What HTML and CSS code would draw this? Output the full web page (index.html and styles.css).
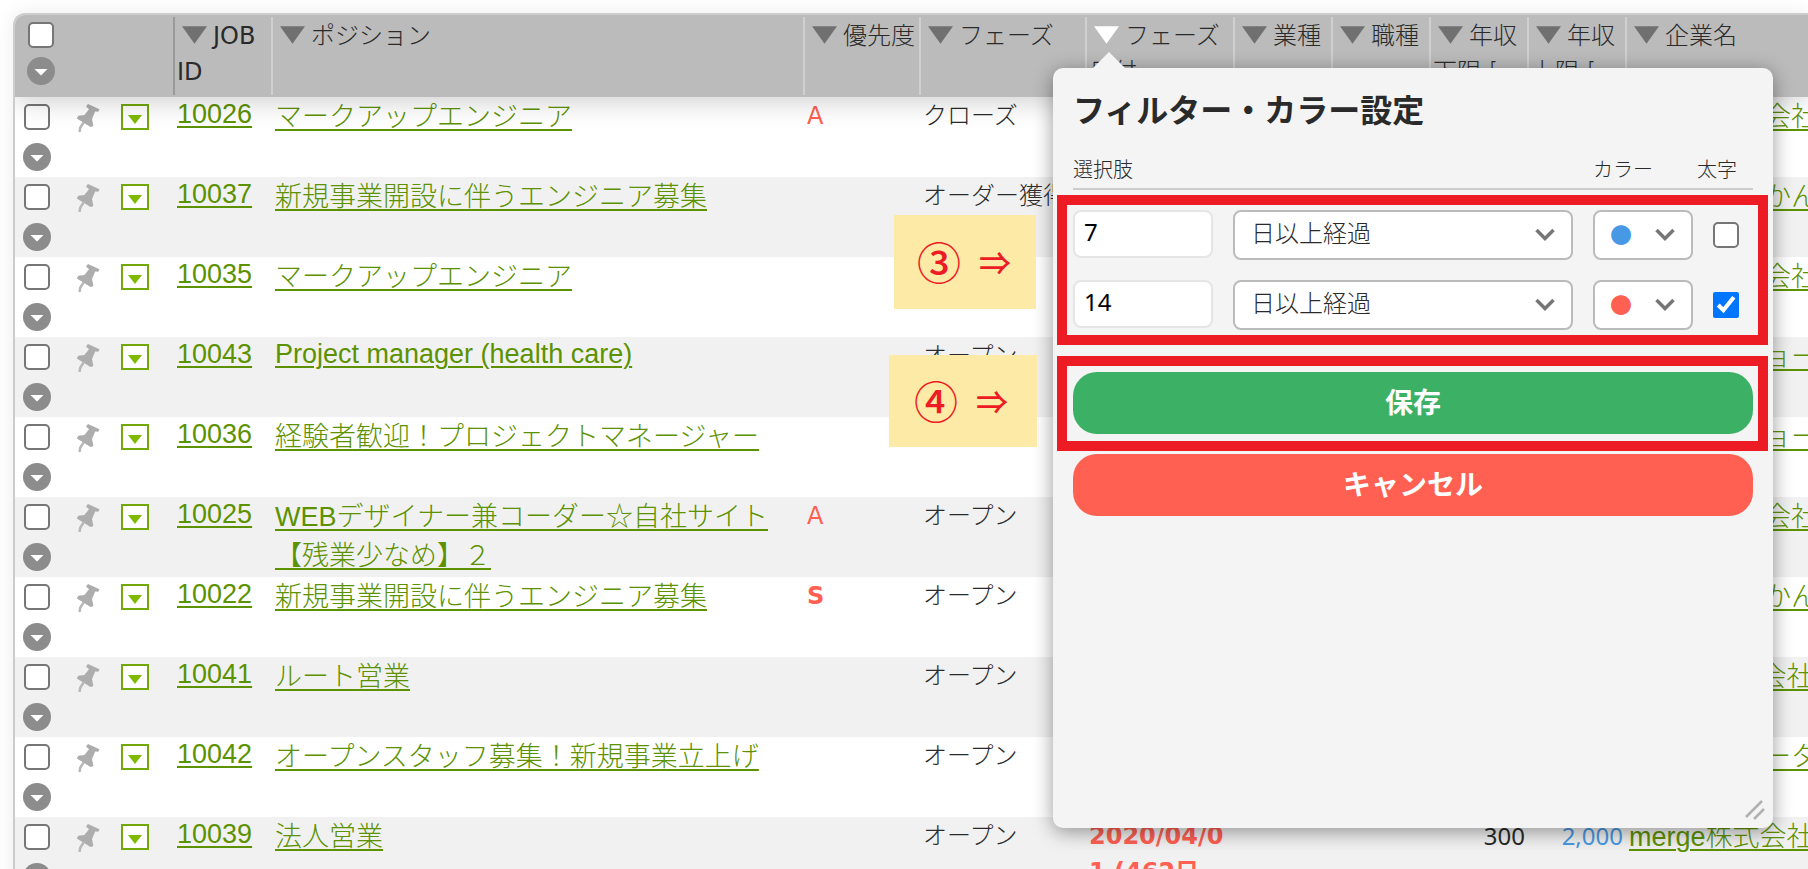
FILE: index.html
```html
<!DOCTYPE html>
<html lang="ja">
<head>
<meta charset="utf-8">
<title>JOB一覧</title>
<link rel="stylesheet" href="styles.css">
</head>
<body>
<svg class="symbols" aria-hidden="true">
  <symbol id="tri" viewBox="0 0 26 18"><path d="M0 0H26L13 18Z" fill="currentColor"/></symbol>
  <symbol id="circle" viewBox="0 0 28 28"><circle cx="14" cy="14" r="14" fill="#8c8c8c"/><path d="M7.500 12H20.500L14 18.500Z" fill="#fff"/></symbol>
  <symbol id="pin" viewBox="0 0 24 28"><path d="M12 0L23.500 5.200L22.300 7.800L19.200 7.600L16 15L17.400 22L14.600 23L.8 14.500L2.200 11.700L8.400 11L13 5.200L10 2.600Z" fill="#adadad"/><path d="M8 18L4.300 23.500L3.500 28" fill="none" stroke="#b8b8b8" stroke-width="2.500"/></symbol>
  <symbol id="drop" viewBox="0 0 14 9"><path d="M0 0H14L7 9Z" fill="#7fba00"/></symbol>
  <symbol id="chevron" viewBox="0 0 20 14"><path d="M1.500 2L10 10.500L18.500 2" fill="none" stroke="#767676" stroke-width="3.500"/></symbol>
</svg>
<main class="page">
  <div class="list">
    <table class="jobs">
      <colgroup>
        <col class="c-tools"><col class="c-narrow"><col class="c-title"><col class="c-priority"><col class="c-phase"><col class="c-date"><col class="c-narrow"><col class="c-narrow"><col class="c-narrow"><col class="c-narrow"><col>
      </colgroup>
      <thead>
        <tr>
          <th><div class="tools"><div class="pick"><input type="checkbox" aria-label="すべて選択"><button type="button" class="more" aria-label="一括操作"><svg><use href="#circle"/></svg></button></div></div></th>
          <th class="first"><div class="head"><button type="button" class="sort" aria-label="絞り込み"><svg><use href="#tri"/></svg></button>JOB ID</div></th>
          <th><div class="head"><button type="button" class="sort" aria-label="絞り込み"><svg><use href="#tri"/></svg></button>ポジション</div></th>
          <th><div class="head"><button type="button" class="sort" aria-label="絞り込み"><svg><use href="#tri"/></svg></button>優先度</div></th>
          <th><div class="head"><button type="button" class="sort" aria-label="絞り込み"><svg><use href="#tri"/></svg></button>フェーズ</div></th>
          <th><div class="head"><button type="button" class="sort active" aria-label="絞り込み"><svg><use href="#tri"/></svg></button>フェーズ日付</div></th>
          <th><div class="head"><button type="button" class="sort" aria-label="絞り込み"><svg><use href="#tri"/></svg></button>業種</div></th>
          <th><div class="head"><button type="button" class="sort" aria-label="絞り込み"><svg><use href="#tri"/></svg></button>職種</div></th>
          <th><div class="head"><button type="button" class="sort" aria-label="絞り込み"><svg><use href="#tri"/></svg></button>年収下限 [</div></th>
          <th><div class="head"><button type="button" class="sort" aria-label="絞り込み"><svg><use href="#tri"/></svg></button>年収上限 [</div></th>
          <th><div class="head"><button type="button" class="sort" aria-label="絞り込み"><svg><use href="#tri"/></svg></button>企業名</div></th>
        </tr>
      </thead>
      <tbody>
        <tr>
          <td><div class="tools"><div class="pick"><input type="checkbox" aria-label="10026を選択"><button type="button" class="more" aria-label="操作"><svg><use href="#circle"/></svg></button></div><button type="button" class="pin" aria-label="ピン留め"><svg><use href="#pin"/></svg></button><button type="button" class="drop" aria-label="メニュー"><svg><use href="#drop"/></svg></button></div></td>
          <td class="id"><a href="#10026">10026</a></td><td class="name"><a href="#10026">マークアップエンジニア</a></td><td class="red">A</td><td>クローズ</td><td></td><td></td><td></td><td></td><td></td><td class="name company"><a href="#c1">りんご株式会社</a></td>
        </tr>
        <tr>
          <td><div class="tools"><div class="pick"><input type="checkbox" aria-label="10037を選択"><button type="button" class="more" aria-label="操作"><svg><use href="#circle"/></svg></button></div><button type="button" class="pin" aria-label="ピン留め"><svg><use href="#pin"/></svg></button><button type="button" class="drop" aria-label="メニュー"><svg><use href="#drop"/></svg></button></div></td>
          <td class="id"><a href="#10037">10037</a></td><td class="name"><a href="#10037">新規事業開設に伴うエンジニア募集</a></td><td></td><td>オーダー獲得</td><td></td><td></td><td></td><td></td><td></td><td class="name company"><a href="#c2">株式会社みかん</a></td>
        </tr>
        <tr>
          <td><div class="tools"><div class="pick"><input type="checkbox" aria-label="10035を選択"><button type="button" class="more" aria-label="操作"><svg><use href="#circle"/></svg></button></div><button type="button" class="pin" aria-label="ピン留め"><svg><use href="#pin"/></svg></button><button type="button" class="drop" aria-label="メニュー"><svg><use href="#drop"/></svg></button></div></td>
          <td class="id"><a href="#10035">10035</a></td><td class="name"><a href="#10035">マークアップエンジニア</a></td><td></td><td></td><td></td><td></td><td></td><td></td><td></td><td class="name company"><a href="#c1">りんご株式会社</a></td>
        </tr>
        <tr>
          <td><div class="tools"><div class="pick"><input type="checkbox" aria-label="10043を選択"><button type="button" class="more" aria-label="操作"><svg><use href="#circle"/></svg></button></div><button type="button" class="pin" aria-label="ピン留め"><svg><use href="#pin"/></svg></button><button type="button" class="drop" aria-label="メニュー"><svg><use href="#drop"/></svg></button></div></td>
          <td class="id"><a href="#10043">10043</a></td><td class="name latin"><a href="#10043">Project manager (health care)</a></td><td></td><td>オープン</td><td></td><td></td><td></td><td></td><td></td><td class="name company"><a href="#c3">株式会社ショー</a></td>
        </tr>
        <tr>
          <td><div class="tools"><div class="pick"><input type="checkbox" aria-label="10036を選択"><button type="button" class="more" aria-label="操作"><svg><use href="#circle"/></svg></button></div><button type="button" class="pin" aria-label="ピン留め"><svg><use href="#pin"/></svg></button><button type="button" class="drop" aria-label="メニュー"><svg><use href="#drop"/></svg></button></div></td>
          <td class="id"><a href="#10036">10036</a></td><td class="name"><a href="#10036">経験者歓迎！プロジェクトマネージャー</a></td><td></td><td></td><td></td><td></td><td></td><td></td><td></td><td class="name company"><a href="#c3">株式会社ショー</a></td>
        </tr>
        <tr>
          <td><div class="tools"><div class="pick"><input type="checkbox" aria-label="10025を選択"><button type="button" class="more" aria-label="操作"><svg><use href="#circle"/></svg></button></div><button type="button" class="pin" aria-label="ピン留め"><svg><use href="#pin"/></svg></button><button type="button" class="drop" aria-label="メニュー"><svg><use href="#drop"/></svg></button></div></td>
          <td class="id"><a href="#10025">10025</a></td><td class="name"><a href="#10025">WEBデザイナー兼コーダー☆自社サイト<br>【残業少なめ】２</a></td><td class="red">A</td><td>オープン</td><td></td><td></td><td></td><td></td><td></td><td class="name company"><a href="#c1">りんご株式会社</a></td>
        </tr>
        <tr>
          <td><div class="tools"><div class="pick"><input type="checkbox" aria-label="10022を選択"><button type="button" class="more" aria-label="操作"><svg><use href="#circle"/></svg></button></div><button type="button" class="pin" aria-label="ピン留め"><svg><use href="#pin"/></svg></button><button type="button" class="drop" aria-label="メニュー"><svg><use href="#drop"/></svg></button></div></td>
          <td class="id"><a href="#10022">10022</a></td><td class="name"><a href="#10022">新規事業開設に伴うエンジニア募集</a></td><td class="red strong">S</td><td>オープン</td><td></td><td></td><td></td><td></td><td></td><td class="name company"><a href="#c2">株式会社みかん</a></td>
        </tr>
        <tr>
          <td><div class="tools"><div class="pick"><input type="checkbox" aria-label="10041を選択"><button type="button" class="more" aria-label="操作"><svg><use href="#circle"/></svg></button></div><button type="button" class="pin" aria-label="ピン留め"><svg><use href="#pin"/></svg></button><button type="button" class="drop" aria-label="メニュー"><svg><use href="#drop"/></svg></button></div></td>
          <td class="id"><a href="#10041">10041</a></td><td class="name"><a href="#10041">ルート営業</a></td><td></td><td>オープン</td><td></td><td></td><td></td><td></td><td></td><td class="name company"><a href="#c4">merge株式会社</a></td>
        </tr>
        <tr>
          <td><div class="tools"><div class="pick"><input type="checkbox" aria-label="10042を選択"><button type="button" class="more" aria-label="操作"><svg><use href="#circle"/></svg></button></div><button type="button" class="pin" aria-label="ピン留め"><svg><use href="#pin"/></svg></button><button type="button" class="drop" aria-label="メニュー"><svg><use href="#drop"/></svg></button></div></td>
          <td class="id"><a href="#10042">10042</a></td><td class="name"><a href="#10042">オープンスタッフ募集！新規事業立上げ</a></td><td></td><td>オープン</td><td></td><td></td><td></td><td></td><td></td><td class="name company"><a href="#c5">株式会社データ</a></td>
        </tr>
        <tr>
          <td><div class="tools"><div class="pick"><input type="checkbox" aria-label="10039を選択"><button type="button" class="more" aria-label="操作"><svg><use href="#circle"/></svg></button></div><button type="button" class="pin" aria-label="ピン留め"><svg><use href="#pin"/></svg></button><button type="button" class="drop" aria-label="メニュー"><svg><use href="#drop"/></svg></button></div></td>
          <td class="id"><a href="#10039">10039</a></td><td class="name"><a href="#10039">法人営業</a></td><td></td><td>オープン</td><td class="date">2020/04/01 (462日</td><td></td><td></td><td class="num">300</td><td class="num blue">2,000</td><td class="name company"><a href="#c4">merge株式会社</a></td>
        </tr>
      </tbody>
    </table>
  </div>

  <form class="popover" aria-labelledby="popover-title">
    <svg class="arrow" viewBox="0 0 32 16" aria-hidden="true"><path d="M0 16L16 0L32 16Z" fill="#f4f4f4"/></svg>
    <h2 id="popover-title" class="title">フィルター・カラー設定</h2>
    <div class="labels"><span>選択肢</span><span id="l-color">カラー</span><span id="l-bold">太字</span></div>
    <div class="rules framed">
      <div class="rule">
        <input class="days" type="text" value="7" aria-label="日数">
        <div class="select"><select aria-label="条件"><option>日以上経過</option></select><svg><use href="#chevron"/></svg></div>
        <div class="select color"><select class="blue" aria-labelledby="l-color"><option>●</option></select><svg><use href="#chevron"/></svg></div>
        <input type="checkbox" aria-labelledby="l-bold">
      </div>
      <div class="rule">
        <input class="days" type="text" value="14" aria-label="日数">
        <div class="select"><select aria-label="条件"><option>日以上経過</option></select><svg><use href="#chevron"/></svg></div>
        <div class="select color"><select class="red" aria-labelledby="l-color"><option>●</option></select><svg><use href="#chevron"/></svg></div>
        <input type="checkbox" aria-labelledby="l-bold" checked>
      </div>
    </div>
    <div class="save-area framed"><button type="submit" class="btn save">保存</button></div>
    <button type="button" class="btn cancel">キャンセル</button>
    <svg class="grip" viewBox="0 0 20 20" aria-hidden="true"><path d="M1 17L17 1M9 19L19 9" stroke="#b0b0b0" stroke-width="2.500"/></svg>
  </form>

  <div class="note note-3"><span class="step">③</span><span>⇒</span></div>
  <div class="note note-4"><span class="step">④</span><span>⇒</span></div>
</main>
</body>
</html>
```
FILE: styles.css
```css
* {
  box-sizing: border-box;
}

body {
  margin: 0;
  height: 100vh;
  overflow: hidden;
  background: #fff;
  color: #2a2a2a;
  font-family: "DejaVu Sans", "Noto Sans CJK JP", sans-serif;
  font-weight: 300;
  font-size: 24px;
  line-height: 36px;
}

button,
input,
select {
  margin: 0;
  font: inherit;
}

button {
  display: block;
  padding: 0;
  border: 0;
  background: none;
  cursor: pointer;
}

svg {
  display: block;
}

input[type="checkbox"] {
  width: 26px;
  height: 26px;
}

input[type="checkbox"]:not(:checked) {
  border: 2px solid #767676;
  border-radius: 5px;
  background: #fff;
  appearance: none;
}

.symbols {
  position: absolute;
  width: 0;
  height: 0;
}

.page {
  position: relative;
  height: 100%;
  padding: 13px 0 0 13px;
  overflow: hidden;
}

.list {
  overflow: hidden;
  border: 2px solid #ccc;
  border-width: 2px 0 0 2px;
  border-top-left-radius: 12px;
  box-shadow: 0 0 20px rgba(0, 0, 0, 0.08);
}

.jobs {
  width: 100%;
  min-width: 1793px;
  table-layout: fixed;
  border-collapse: separate;
  border-spacing: 0;
}

.c-tools { width: 158px; }
.c-narrow { width: 98px; }
.c-title { width: 532px; }
.c-priority { width: 116px; }
.c-phase { width: 166px; }
.c-date { width: 148px; }

thead {
  position: relative;
  z-index: 1;
  background: #bbb;
  box-shadow: 0 4px 28px rgba(0, 0, 0, 0.2);
}

th {
  height: 82px;
  padding: 2px 0;
  vertical-align: top;
  text-align: left;
  font-weight: 300;
}

th.first {
  font-weight: 400;
}

.head {
  height: 78px;
  padding: 1px 0 0 2px;
  border-left: 2px solid #d0d0d0;
  overflow: hidden;
}

.first .head {
  border-color: #999;
}

.sort {
  display: inline-block;
  margin: 0 6px 0 5px;
  color: #707070;
}

.sort svg {
  width: 25px;
  height: 18px;
}

.sort.active {
  color: #fff;
}

td {
  height: 80px;
  padding: 1px 0 0 4px;
  vertical-align: top;
  white-space: nowrap;
}

tbody tr:nth-child(even) {
  background: #f1f1f1;
}

.tools {
  display: flex;
  padding: 6px 0 0 4px;
}

th .tools {
  padding: 5px 0 0 12px;
}

.pick {
  display: flex;
  flex-direction: column;
  align-items: center;
  gap: 13px;
  width: 28px;
}

th .pick {
  gap: 9px;
}

.more svg {
  width: 28px;
  height: 28px;
}

.pin {
  align-self: flex-start;
  margin-left: 25px;
}

.pin svg {
  width: 24px;
  height: 28px;
  overflow: visible;
}

.drop {
  display: flex;
  align-items: center;
  justify-content: center;
  width: 28px;
  height: 26px;
  margin-left: 21px;
  padding-top: 4px;
  border: 2px solid #72a80a;
  background: #fff;
}

.drop svg {
  width: 14px;
  height: 9px;
}

a {
  color: #5c9200;
  text-decoration: underline;
  text-decoration-thickness: 2px;
  text-underline-offset: 3px;
}

.id,
.name {
  font-family: "Liberation Sans", "Noto Sans CJK JP", sans-serif;
  font-size: 27px;
  line-height: 40px;
}

.name {
  line-height: 39px;
}

.id,
.latin {
  line-height: 32px;
}

.company {
  overflow: hidden;
}

.red {
  color: #ff6052;
  font-weight: 400;
}

.blue {
  color: #4899e5;
}

.strong {
  font-weight: 700;
}

.date {
  color: #ff6052;
  font-weight: 700;
  white-space: normal;
  word-break: break-all;
}

.num {
  padding-right: 2px;
  font-family: "Noto Sans", sans-serif;
  font-weight: 400;
  text-align: right;
}

.popover {
  position: absolute;
  z-index: 2;
  top: 68px;
  left: 1053px;
  width: 720px;
  height: 760px;
  padding: 20px;
  border-radius: 10px;
  background: #f4f4f4;
  box-shadow: 0 4px 20px rgba(0, 0, 0, 0.4);
}

.arrow {
  position: absolute;
  top: -16px;
  left: 40px;
  width: 32px;
  height: 16px;
}

.title {
  margin: 0;
  font-family: "Noto Sans CJK JP", sans-serif;
  font-size: 32px;
  font-weight: 700;
  line-height: 40px;
}

.labels {
  display: grid;
  grid-template-columns: 1fr 104px 56px;
  margin: 26px 0 20px;
  padding: 1px 0 3px;
  border-bottom: 2px solid #ccc;
  font-size: 20px;
  line-height: 30px;
}

.framed {
  position: relative;
}

.framed::after {
  content: "";
  position: absolute;
  inset: -15px -15px -15px -16px;
  border: 10px solid #ed1c24;
  pointer-events: none;
}

.rules {
  display: grid;
  gap: 20px;
}

.rule {
  display: grid;
  grid-template-columns: 140px 1fr 100px 40px;
  gap: 20px;
  align-items: center;
}

.days {
  align-self: start;
  width: 100%;
  height: 48px;
  padding: 0 9px 6px;
  border: 2px solid #e5e5e5;
  border-radius: 8px;
  background: #fff;
  color: #000;
  font-family: "Noto Sans", sans-serif;
  font-weight: 400;
}

.select {
  position: relative;
}

.select select {
  display: block;
  width: 100%;
  height: 50px;
  padding: 0 16px 2px;
  border: 2px solid #bbb;
  border-radius: 8px;
  background: #fff;
  color: #2a2a2a;
  appearance: none;
}

.select .blue {
  color: #4899e5;
}

.select .red {
  color: #ff6052;
}

.color select {
  padding: 0 15px 4px;
  font-family: "Noto Sans CJK JP", sans-serif;
  font-size: 22px;
}

.select svg {
  position: absolute;
  top: 18px;
  right: 18px;
  width: 20px;
  height: 14px;
  pointer-events: none;
}

.save-area {
  margin: 42px 0 20px;
}

.save-area::after {
  inset: -16px -15px -17px -16px;
}

.btn {
  width: 100%;
  height: 62px;
  padding-bottom: 5px;
  border-radius: 24px;
  color: #fff;
  font-family: "Noto Sans CJK JP", sans-serif;
  font-size: 28px;
  font-weight: 700;
  line-height: 40px;
}

.save {
  background: #3cb166;
}

.cancel {
  background: #ff6052;
}

.grip {
  position: absolute;
  right: 8px;
  bottom: 8px;
  width: 20px;
  height: 20px;
}

.note {
  position: absolute;
  z-index: 3;
  display: flex;
  align-items: center;
  gap: 18px;
  padding: 0 0 2px 23px;
  background: #fdeaa6;
  color: #ed1c24;
  font-family: "Noto Sans CJK JP", sans-serif;
  font-size: 32px;
  font-weight: 500;
}

.step {
  font-size: 44px;
}

.note-3 {
  top: 215px;
  left: 894px;
  width: 142px;
  height: 94px;
}

.note-4 {
  top: 355px;
  left: 889px;
  width: 148px;
  height: 92px;
  padding-left: 25px;
}
```
